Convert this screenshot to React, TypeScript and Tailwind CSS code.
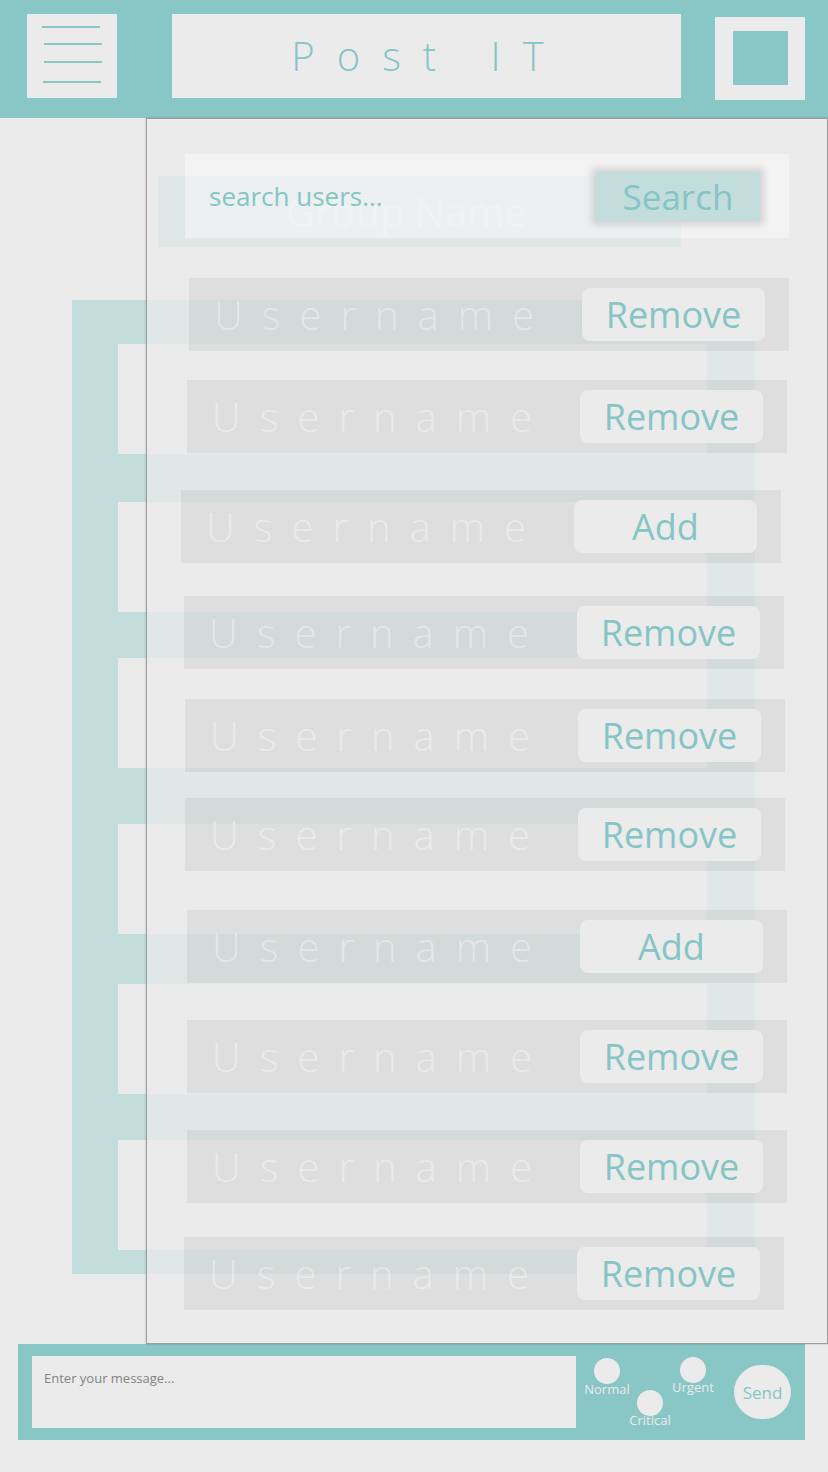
import React from "react";

const rows: { cls: string; label: string }[] = [
  { cls: "mt-[40px] ml-[42px]", label: "Remove" },
  { cls: "mt-[29px] ml-[40px]", label: "Remove" },
  { cls: "mt-[37px] ml-[34px]", label: "Add" },
  { cls: "mt-[33px] ml-[37px]", label: "Remove" },
  { cls: "mt-[30px] ml-[38px]", label: "Remove" },
  { cls: "mt-[26px] ml-[38px]", label: "Remove" },
  { cls: "mt-[39px] ml-[40px]", label: "Add" },
  { cls: "mt-[37px] ml-[40px]", label: "Remove" },
  { cls: "mt-[37px] ml-[40px]", label: "Remove" },
  { cls: "mt-[34px] ml-[37px]", label: "Remove" },
];

const cards = [
  "mt-[44px]",
  "mt-[48px]",
  "mt-[46px]",
  "mt-[56px]",
  "mt-[50px]",
  "mt-[46px]",
];

export default function App() {
  return (
    <div
      className="relative w-full h-[1472px] bg-[#ebebeb] overflow-hidden"
      style={{ fontFamily: '"Open Sans", "Noto Sans", sans-serif' }}
    >
      {/* Header */}
      <div className="h-[118px] bg-[#89c6c6] flex items-start pt-[14px] pl-[27px]">
        <div className="w-[90px] h-[84px] bg-[#ebebeb] flex flex-col pt-[12px] pl-[15px]">
          <div className="w-[58px] h-[2px] bg-[#89c6c6]" />
          <div className="w-[58px] h-[2px] bg-[#89c6c6] mt-[15px] ml-[2px]" />
          <div className="w-[58px] h-[2px] bg-[#89c6c6] mt-[16px] ml-[2px]" />
          <div className="w-[58px] h-[2px] bg-[#89c6c6] mt-[18px] ml-[1px]" />
        </div>
        <div className="ml-[55px] w-[509px] h-[84px] bg-[#ebebeb] flex items-center justify-center">
          <span className="ml-[4px] text-[40px] font-light tracking-[22px] text-[#86c5c5] leading-none whitespace-pre">
            Post IT
          </span>
        </div>
        <div className="ml-[34px] mt-[3px] w-[90px] h-[83px] bg-[#ebebeb] flex items-start pt-[14px] pl-[18px]">
          <div className="w-[55px] h-[54px] bg-[#89c6c6]" />
        </div>
      </div>

      {/* Group name (behind) */}
      <div className="mt-[58px] ml-[158px] w-[523px] h-[71px] bg-[#c3dddd] flex items-center pl-[128px]">
        <span className="text-[40px] text-white/40 leading-none">Group Name</span>
      </div>

      {/* Teal panel (behind) */}
      <div className="mt-[53px] ml-[72px] w-[683px] h-[974px] bg-[#c3dddd] flex flex-col pl-[46px]">
        {cards.map((c, i) => (
          <div key={i} className={`${c} w-[589px] h-[110px] bg-[#ebebeb]`} />
        ))}
      </div>

      {/* Composer */}
      <div className="mt-[70px] ml-[18px] w-[787px] h-[96px] bg-[#89c6c6] flex items-start pt-[12px] pl-[14px]">
        <div className="w-[544px] h-[72px] bg-[#ebebeb] pt-[9px] pl-[12px]">
          <span className="text-[13px] text-[#7f8585] leading-none">Enter your message...</span>
        </div>
        <div className="ml-[9px] w-[44px] flex flex-col items-center pt-[2px]">
          <div className="w-[26px] h-[26px] rounded-full bg-[#ebebeb]" />
          <span className="-mt-[3px] text-[13px] leading-[16px] text-[#ebebeb] whitespace-nowrap">Normal</span>
        </div>
        <div className="w-[42px] flex flex-col items-center pt-[34px]">
          <div className="w-[26px] h-[26px] rounded-full bg-[#ebebeb]" />
          <span className="-mt-[4px] text-[13px] leading-[16px] text-[#ebebeb] whitespace-nowrap">Critical</span>
        </div>
        <div className="w-[44px] flex flex-col items-center pt-[1px]">
          <div className="w-[26px] h-[26px] rounded-full bg-[#ebebeb]" />
          <span className="-mt-[4px] text-[13px] leading-[16px] text-[#ebebeb] whitespace-nowrap">Urgent</span>
        </div>
        <div className="ml-[19px] self-center -mt-[12px] w-[57px] h-[54px] rounded-full bg-[#ebebeb] flex items-center justify-center">
          <span className="text-[17px] text-[#86c5c5] leading-none">Send</span>
        </div>
      </div>

      {/* Modal overlay */}
      <div className="absolute top-[118px] left-[146px] right-0 h-[1226px] bg-[#ebebeb]/70 border border-[#9e9e9e] shadow-[0_0_2px_rgba(0,0,0,0.25)] flex flex-col">
        <div className="mt-[35px] ml-[38px] w-[604px] h-[84px] bg-white/40 flex items-center pl-[24px] pr-[29px]">
          <span className="text-[26px] text-[#86c5c5] leading-none flex-1">search users...</span>
          <div className="w-[164px] h-[49px] bg-[#c3dddd] shadow-[0_0_7px_4px_rgba(0,0,0,0.13)] flex items-center justify-center">
            <span className="text-[35px] text-[#86c5c5] leading-none">Search</span>
          </div>
        </div>
        {rows.map((r, i) => (
          <div
            key={i}
            className={`${r.cls} w-[600px] h-[73px] bg-black/[0.055] flex items-center pl-[25px] pr-[24px]`}
          >
            <span className="flex-1 text-[40px] font-light tracking-[19px] text-white/40 leading-none">
              Username
            </span>
            <div className="w-[183px] h-[53px] rounded-[8px] bg-[#ebebeb] flex items-center justify-center">
              <span className="text-[36px] text-[#86c5c5] leading-none">{r.label}</span>
            </div>
          </div>
        ))}
      </div>
    </div>
  );
}
